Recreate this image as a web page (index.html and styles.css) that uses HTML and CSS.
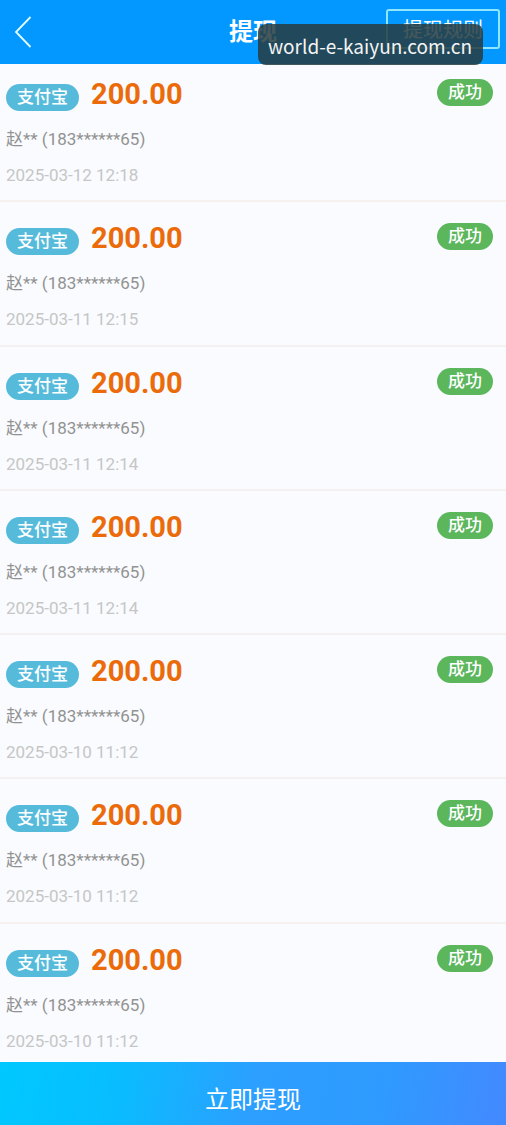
FILE: index.html
```html
<!DOCTYPE html>
<html lang="zh-CN">
<head>
<meta charset="utf-8">
<meta name="viewport" content="width=device-width, initial-scale=1">
<title>提现</title>
<link rel="stylesheet" href="styles.css">
</head>
<body>
<header class="topbar">
  <a class="back" href="#" aria-label="返回">
    <svg width="18" height="32" viewBox="0 0 18 32" fill="none" stroke="currentColor" stroke-width="1.8"><path d="M16.500 1 2 16l14.500 15"/></svg>
  </a>
  <h1 class="title">提现</h1>
  <button class="rules" type="button">提现规则</button>
  <span class="site-tag">world-e-kaiyun.com.cn</span>
</header>
<main class="content">
  <ul class="records">
    <li class="record"><div class="summary"><span class="pill method">支付宝</span><strong class="amount">200.00</strong><span class="pill status">成功</span></div><p class="account">赵** (183******65)</p><time class="date">2025-03-12 12:18</time></li>
    <li class="record"><div class="summary"><span class="pill method">支付宝</span><strong class="amount">200.00</strong><span class="pill status">成功</span></div><p class="account">赵** (183******65)</p><time class="date">2025-03-11 12:15</time></li>
    <li class="record"><div class="summary"><span class="pill method">支付宝</span><strong class="amount">200.00</strong><span class="pill status">成功</span></div><p class="account">赵** (183******65)</p><time class="date">2025-03-11 12:14</time></li>
    <li class="record"><div class="summary"><span class="pill method">支付宝</span><strong class="amount">200.00</strong><span class="pill status">成功</span></div><p class="account">赵** (183******65)</p><time class="date">2025-03-11 12:14</time></li>
    <li class="record"><div class="summary"><span class="pill method">支付宝</span><strong class="amount">200.00</strong><span class="pill status">成功</span></div><p class="account">赵** (183******65)</p><time class="date">2025-03-10 11:12</time></li>
    <li class="record"><div class="summary"><span class="pill method">支付宝</span><strong class="amount">200.00</strong><span class="pill status">成功</span></div><p class="account">赵** (183******65)</p><time class="date">2025-03-10 11:12</time></li>
    <li class="record"><div class="summary"><span class="pill method">支付宝</span><strong class="amount">200.00</strong><span class="pill status">成功</span></div><p class="account">赵** (183******65)</p><time class="date">2025-03-10 11:12</time></li>
  </ul>
</main>
<button class="withdraw" type="button">立即提现</button>
</body>
</html>
```
FILE: styles.css
```css
* { box-sizing: border-box; }

body {
  margin: 0;
  min-height: 100vh;
  display: flex;
  flex-direction: column;
  background: #f9fbfe;
  font-family: Roboto, "Noto Sans CJK SC", sans-serif;
}

button { font-family: inherit; cursor: pointer; }

.topbar {
  position: relative;
  display: grid;
  grid-template-columns: 1fr auto 1fr;
  align-items: center;
  height: 64px;
  padding: 0 6px;
  background: #0398ff;
  color: #fff;
}

.back { display: flex; padding-left: 8px; color: #e4fbff; }

.title {
  margin: 0;
  font-size: 24px;
  line-height: 36px;
  font-weight: 700;
}

.rules {
  justify-self: end;
  height: 40px;
  margin-bottom: 6px;
  padding: 2px 15px 0;
  border: 2px solid #8fe6ff;
  border-radius: 3px;
  background: none;
  color: #fff;
  font-size: 20px;
  line-height: 34px;
}

.site-tag {
  position: absolute;
  right: 23px;
  bottom: -1px;
  padding: 2px 11px 0 10px;
  border-radius: 8px;
  background: rgba(40, 60, 64, .86);
  color: #f4f4f4;
  font-family: "Noto Sans CJK SC", sans-serif;
  font-size: 19px;
  line-height: 39px;
}

.content { flex: 1; display: flex; flex-direction: column; }

.records {
  flex: 1;
  display: flex;
  flex-direction: column;
  margin: 0;
  padding: 0;
  list-style: none;
}

.record {
  flex: 1 0 auto;
  padding: 24px 13px 13px 6px;
  border-bottom: 2px solid #f5f1f0;
}

.record:first-child { padding-top: 18px; }
.record:last-child { padding-bottom: 9px; border-bottom: 0; }

.summary { display: flex; align-items: flex-start; }

.amount {
  flex: 1;
  margin-left: 12px;
  color: #eb6b0b;
  font-size: 29px;
  line-height: 24px;
  font-weight: 700;
}

.pill {
  height: 27px;
  padding: 0 11px;
  border-radius: 14px;
  color: #fff;
  font-size: 17px;
  line-height: 27px;
  font-weight: 500;
}

.method { margin-top: 2px; background: #56bbdb; }
.status { margin-top: -3px; background: #5bb65c; }

.account {
  margin: 16px 0 12px;
  color: #929292;
  font-size: 17px;
  line-height: 24px;
}

.date {
  display: block;
  color: #c6c6c6;
  font-size: 17px;
  line-height: 24px;
}

.withdraw {
  height: 63px;
  padding: 8px 0 0;
  border: 0;
  background: linear-gradient(100deg, #00c8ff 0%, #08bdff 23%, #2c9fff 50%, #2e9aff 75%, #4389ff 100%);
  color: #fff;
  font-size: 24px;
}
```
